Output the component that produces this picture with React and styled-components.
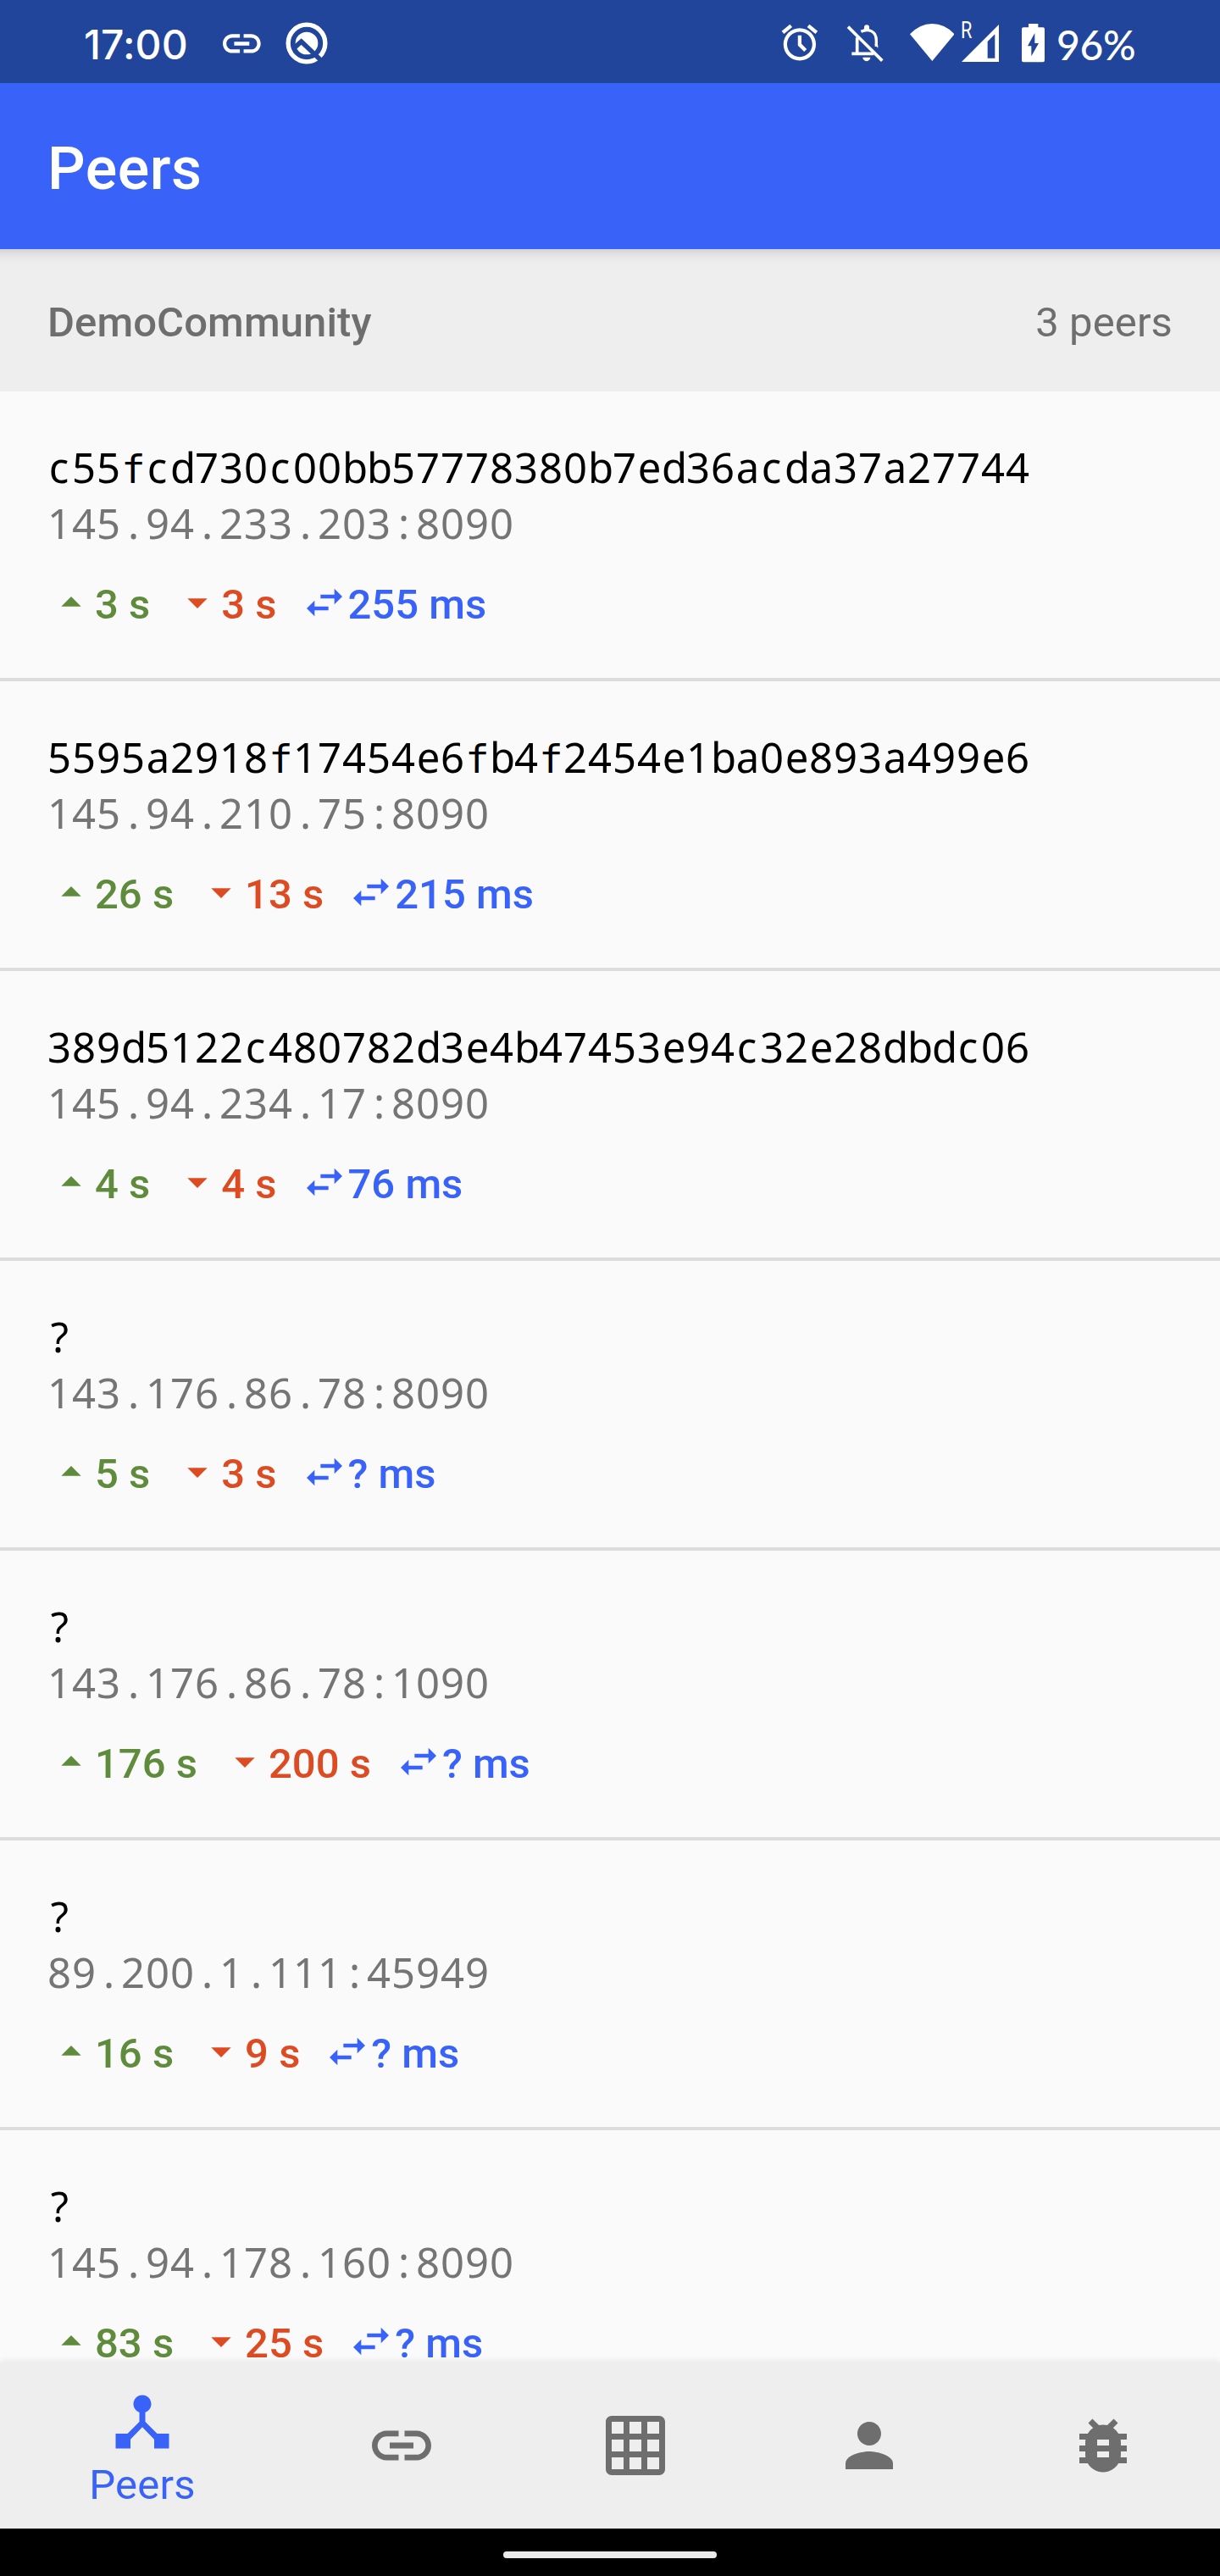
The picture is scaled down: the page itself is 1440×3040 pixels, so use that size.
import React from "react";
import styled, { createGlobalStyle } from "styled-components";

const colors = {
  status: "#20459a",
  primary: "#3862f8",
  header: "#eeeeee",
  surface: "#fafafa",
  divider: "#dcdcdc",
  muted: "#6e6e6e",
  address: "#757575",
  sent: "#5f8c3c",
  received: "#dd4b22",
};

const GlobalStyle = createGlobalStyle`
  *, *::before, *::after { box-sizing: border-box; }
  body { margin: 0; background: ${colors.surface}; }
`;

const Screen = styled.div`
  display: flex;
  flex-direction: column;
  width: 1440px;
  height: 3040px;
  overflow: hidden;
  background: ${colors.surface};
  font-family: Roboto, "Liberation Sans", sans-serif;
`;

const StatusBar = styled.div`
  display: flex;
  flex: none;
  justify-content: space-between;
  height: 98px;
  padding: 0 98px 0 99px;
  background: ${colors.status};
  color: #fff;
`;

const StatusGroup = styled.div`
  display: flex;
  align-items: flex-start;
`;

const Clock = styled.span`
  width: 124px;
  padding-top: 4px;
  font: 500 48px/98px Inter, sans-serif;
  letter-spacing: 0.1px;
  white-space: nowrap;
`;

const Battery = styled.span`
  width: 95px;
  margin-left: 14px;
  padding-top: 4px;
  font: 500 48px/98px Lato, sans-serif;
  letter-spacing: -0.4px;
  white-space: nowrap;
`;

const Roaming = styled.span`
  width: 14px;
  margin: 20px -13px 0 8px;
  font: 400 27px/33px Roboto, sans-serif;
  transform: scaleX(0.8);
  transform-origin: left;
`;

const StatusIcon = styled.svg`
  flex: none;
  width: ${(p) => p.$w}px;
  height: ${(p) => p.$h}px;
  margin: ${(p) => p.$top}px 0 0 ${(p) => p.$gap || 0}px;
  fill: #fff;
`;

const AppBar = styled.header`
  flex: none;
  height: 196px;
  padding: 3px 56px 0;
  background: ${colors.primary};
`;

const Title = styled.h1`
  margin: 0;
  color: #fff;
  font-size: 70px;
  font-weight: 500;
  letter-spacing: 0.5px;
  line-height: 196px;
`;

const CommunityHeader = styled.section`
  display: flex;
  flex: none;
  justify-content: space-between;
  height: 168px;
  padding: 3px 56px 0;
  background: linear-gradient(#d3d3d3, #e0e0e0 5px, #eaeaea 12px, ${colors.header} 20px);
  color: ${colors.muted};
  font-size: 49px;
  letter-spacing: 0.1px;
  line-height: 168px;
`;

const CommunityName = styled.span`
  font-weight: 500;
`;

const PeerList = styled.main`
  flex: none;
  height: 2326px;
  overflow: hidden;
`;

const PeerRow = styled.article`
  height: 342px;
  padding: 56px 56px 0;
  border-bottom: 4px solid ${colors.divider};
`;

const MonoLine = styled.div`
  height: 66px;
  color: ${(p) => p.$color};
  font: 400 49px/66px "Noto Sans", "Open Sans", sans-serif;
  white-space: nowrap;
`;

const DigitRun = styled.span`
  letter-spacing: 0.97px;
`;

const Cell = styled.span`
  display: inline-block;
  width: 29px;
  padding-right: ${(p) => (p.$char === "c" ? 2 : 0)}px;
  font-family: ${(p) => (p.$char === "f" ? '"DejaVu Sans Mono", monospace' : "inherit")};
  font-size: ${(p) => (p.$char === "f" ? "47px" : "inherit")};
  text-align: center;
`;

const Stats = styled.div`
  display: flex;
  gap: 28px;
  height: 62px;
  margin-top: 33px;
`;

const Stat = styled.div`
  display: flex;
  color: ${(p) => p.$color};
  font-size: 49px;
  font-weight: 500;
  line-height: 62px;
  white-space: nowrap;
`;

const Glyph = styled.svg`
  flex: none;
  display: block;
  width: ${(p) => p.$size}px;
  height: ${(p) => p.$size}px;
  fill: currentColor;
`;

const BottomNav = styled.nav`
  position: relative;
  display: grid;
  flex: none;
  grid-template-columns: 336px repeat(4, 276px);
  height: 196px;
  background: ${colors.header};
  box-shadow: 0 -1px 9px rgba(0, 0, 0, 0.09);
`;

const NavItem = styled.a`
  display: flex;
  flex-direction: column;
  align-items: center;
  justify-content: ${(p) => (p.$active ? "flex-start" : "center")};
  padding-top: ${(p) => (p.$active ? 27.5 : 0)}px;
  color: ${(p) => (p.$active ? colors.primary : colors.muted)};
`;

const NavLabel = styled.span`
  margin-top: 3.5px;
  font-size: 49px;
  letter-spacing: 0.2px;
  line-height: 60px;
`;

const SystemBar = styled.footer`
  display: flex;
  flex: none;
  align-items: center;
  justify-content: center;
  height: 56px;
  padding-top: 6px;
  background: #000;
`;

const HomePill = styled.div`
  width: 252px;
  height: 8px;
  border-radius: 4px;
  background: #ebebeb;
`;

const paths = {
  up: "M7 14l5-5 5 5z",
  down: "M7 10l5 5 5-5z",
  swap: "M6.99 11L3 15l3.99 4v-3H14v-2H6.99v-3zM21 9l-3.99-4v3H10v2h7.01v3L21 9z",
  hub: "M17 16l-4-4V8.82C14.16 8.4 15 7.3 15 6c0-1.66-1.34-3-3-3S9 4.34 9 6c0 1.3.84 2.4 2 2.82V12l-4 4H3v5h5v-3.05l4-4.2 4 4.2V21h5v-5h-4z",
  link: "M3.9 12c0-1.71 1.39-3.1 3.1-3.1h4V7H7c-2.76 0-5 2.24-5 5s2.24 5 5 5h4v-1.9H7c-1.71 0-3.1-1.39-3.1-3.1zM8 13h8v-2H8v2zm9-6h-4v1.9h4c1.71 0 3.1 1.39 3.1 3.1s-1.39 3.1-3.1 3.1h-4V17h4c2.76 0 5-2.24 5-5s-2.24-5-5-5z",
  grid: "M20 2H4c-1.1 0-2 .9-2 2v16c0 1.1.9 2 2 2h16c1.1 0 2-.9 2-2V4c0-1.1-.9-2-2-2zM8 20H4v-4h4v4zm0-6H4v-4h4v4zm0-6H4V4h4v4zm6 12h-4v-4h4v4zm0-6h-4v-4h4v4zm0-6h-4V4h4v4zm6 12h-4v-4h4v4zm0-6h-4v-4h4v4zm0-6h-4V4h4v4z",
  person:
    "M12 12c2.21 0 4-1.79 4-4s-1.79-4-4-4-4 1.79-4 4 1.79 4 4 4zm0 2c-2.67 0-8 1.34-8 4v2h16v-2c0-2.66-5.33-4-8-4z",
  bug: "M20 8h-2.81c-.45-.78-1.07-1.45-1.82-1.96L17 4.41 15.59 3l-2.17 2.17C12.96 5.06 12.49 5 12 5c-.49 0-.96.06-1.41.17L8.41 3 7 4.41l1.62 1.63C7.88 6.55 7.26 7.22 6.81 8H4v2h2.09c-.05.33-.09.66-.09 1v1H4v2h2v1c0 .34.04.67.09 1H4v2h2.81c1.04 1.79 2.97 3 5.19 3s4.15-1.21 5.19-3H20v-2h-2.09c.05-.33.09-.66.09-1v-1h2v-2h-2v-1c0-.34-.04-.67-.09-1H20V8zm-6 8h-4v-2h4v2zm0-4h-4v-2h4v2z",
};

const Icon = ({ name, size = 56 }) => (
  <Glyph viewBox="0 0 24 24" $size={size} aria-hidden="true">
    <path d={paths[name]} />
  </Glyph>
);

/* Digits share one advance width; every other character sits in a cell of that width. */
const Mono = ({ text, color }) => (
  <MonoLine $color={color}>
    {text
      .match(/\d+|./g)
      .map((run, i) =>
        /\d/.test(run) ? (
          <DigitRun key={i}>{run}</DigitRun>
        ) : (
          <Cell key={i} $char={run}>
            {run}
          </Cell>
        )
      )}
  </MonoLine>
);

const peers = [
  { id: "c55fcd730c00bb57778380b7ed36acda37a27744", address: "145.94.233.203:8090", sent: "3", received: "3", ping: "255" },
  { id: "5595a2918f17454e6fb4f2454e1ba0e893a499e6", address: "145.94.210.75:8090", sent: "26", received: "13", ping: "215" },
  { id: "389d5122c480782d3e4b47453e94c32e28dbdc06", address: "145.94.234.17:8090", sent: "4", received: "4", ping: "76" },
  { id: "?", address: "143.176.86.78:8090", sent: "5", received: "3", ping: "?" },
  { id: "?", address: "143.176.86.78:1090", sent: "176", received: "200", ping: "?" },
  { id: "?", address: "89.200.1.111:45949", sent: "16", received: "9", ping: "?" },
  { id: "?", address: "145.94.178.160:8090", sent: "83", received: "25", ping: "?" },
];

const Peer = ({ peer }) => (
  <PeerRow>
    <Mono text={peer.id} color="#000" />
    <Mono text={peer.address} color={colors.address} />
    <Stats>
      <Stat $color={colors.sent}>
        <Icon name="up" />
        {`${peer.sent} s`}
      </Stat>
      <Stat $color={colors.received}>
        <Icon name="down" />
        {`${peer.received} s`}
      </Stat>
      <Stat $color={colors.primary}>
        <Icon name="swap" />
        {`${peer.ping} ms`}
      </Stat>
    </Stats>
  </PeerRow>
);

const StatusIcons = () => (
  <>
    <StatusIcon viewBox="60 25 132 136" $w={44} $h={45.33} $top={28.33}>
      <g transform="translate(49 15) scale(6.39)">
        <path d="M22 5.72l-4.6-3.86-1.29 1.53 4.6 3.86L22 5.72zM7.88 3.39L6.6 1.86 2 5.71l1.29 1.53 4.59-3.85zM12 4c-4.97 0-9 4.03-9 9s4.02 9 9 9 9-4.03 9-9-4.03-9-9-9zm0 16c-3.87 0-7-3.13-7-7s3.13-7 7-7 7 3.13 7 7-3.13 7-7 7z" />
        <path d="M11 8h2v4.7l2.9 2.9-1.4 1.5L11 13.6z" />
      </g>
    </StatusIcon>
    <StatusIcon viewBox="290 25 138 138" $w={46} $h={46} $top={28.33} $gap={32.67}>
      <g fill="none" stroke="#fff">
        <path d="M299 36L420 156" strokeWidth="11" />
        <path d="M331 74v57M312 131h78" strokeWidth="11" />
        <path d="M345 53C372 40 399 52 399 84v22" strokeWidth="10" />
      </g>
      <path d="M356 46v-8a9 9 0 0 1 18 0v8zM351 144h27a13.500 13.500 0 0 1-27 0z" />
      <path d="M392 98l13 3v10z" />
    </StatusIcon>
    <StatusIcon viewBox="516 25 158 132" $w={52.67} $h={44} $top={28.33} $gap={29.33}>
      <path d="M595 157L516 62Q551 25 595 25T674 62Z" />
    </StatusIcon>
    <Roaming>R</Roaming>
    <StatusIcon viewBox="50 26 132 132" $w={44} $h={44} $top={28.67}>
      <path fillRule="evenodd" d="M50 158L182 26V158ZM142 145h26V60L142 86Z" />
    </StatusIcon>
    <StatusIcon viewBox="258 25 81 136" $w={27} $h={45.33} $top={28.33} $gap={26.67}>
      <path
        fillRule="evenodd"
        d="M282 25h34v13h17a6 6 0 0 1 6 6v111a6 6 0 0 1-6 6h-69a6 6 0 0 1-6-6V44a6 6 0 0 1 6-6h18zM304 58l-25 46h13v36l26-46h-14z"
      />
    </StatusIcon>
  </>
);

export default function App() {
  return (
    <Screen>
      <GlobalStyle />
      <StatusBar>
        <StatusGroup>
          <Clock>17:00</Clock>
          <StatusIcon viewBox="2 6 20 12" $w={44.7} $h={26.82} $top={38} $gap={40}>
            <path d={paths.link} />
          </StatusIcon>
          <StatusIcon viewBox="-75 -75 150 150" $w={50} $h={50} $top={26} $gap={29.5}>
            <circle r="65.500" fill="none" stroke="#fff" strokeWidth="16" />
            <circle r="40" />
            <path
              d="M-47 19L-19-6L50 60"
              fill="none"
              stroke={colors.status}
              strokeWidth="17"
            />
          </StatusIcon>
        </StatusGroup>
        <StatusGroup>
          <StatusIcons />
          <Battery>96%</Battery>
        </StatusGroup>
      </StatusBar>
      <AppBar>
        <Title>Peers</Title>
      </AppBar>
      <CommunityHeader>
        <CommunityName>DemoCommunity</CommunityName>
        <span>3 peers</span>
      </CommunityHeader>
      <PeerList>
        {peers.map((peer) => (
          <Peer key={peer.address} peer={peer} />
        ))}
      </PeerList>
      <BottomNav>
        <NavItem $active>
          <Icon name="hub" size={84} />
          <NavLabel>Peers</NavLabel>
        </NavItem>
        {["link", "grid", "person", "bug"].map((name) => (
          <NavItem key={name}>
            <Icon name={name} size={84} />
          </NavItem>
        ))}
      </BottomNav>
      <SystemBar>
        <HomePill />
      </SystemBar>
    </Screen>
  );
}
